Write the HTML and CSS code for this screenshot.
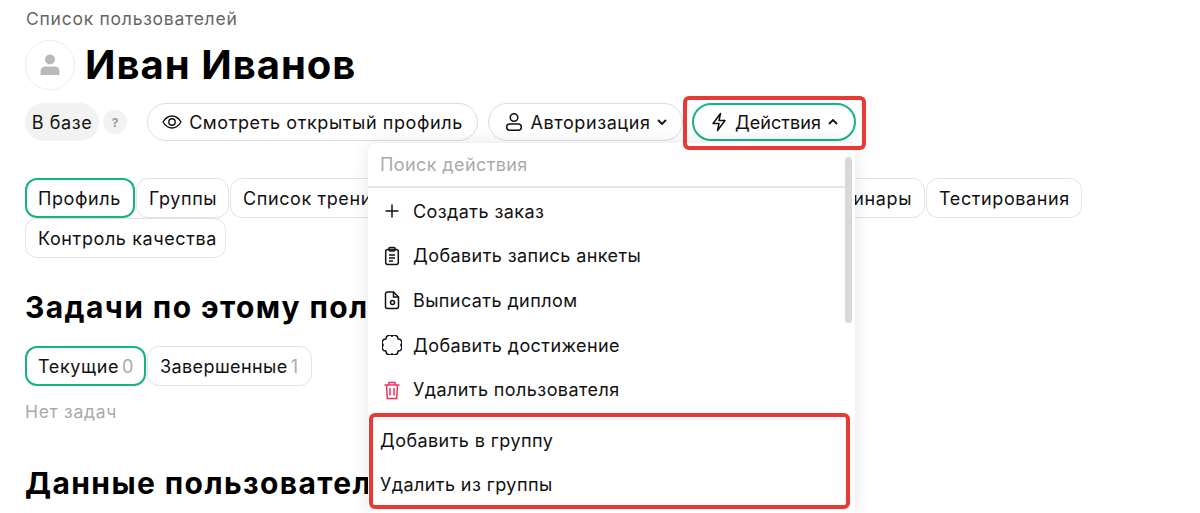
FILE: index.html
```html
<!DOCTYPE html>
<html lang="ru">
<head>
<meta charset="utf-8">
<title>Иван Иванов</title>
<link rel="stylesheet" href="styles.css">
</head>
<body>
<main class="page">
  <div class="crumb">Список пользователей</div>
  <header class="title-row">
    <div class="avatar">
      <svg width="24" height="24" viewBox="0 0 24 24"><circle cx="12" cy="6.500" r="5" fill="#b9b9b9"/><path d="M2.500 22v-3.500c0-3 2-5 5-5h9c3 0 5 2 5 5V22z" fill="#b9b9b9"/></svg>
    </div>
    <h1>Иван Иванов</h1>
  </header>
  <div class="actions">
    <span class="status">В базе</span>
    <span class="help">?</span>
    <button class="btn btn-profile">
      <svg width="20" height="20" viewBox="0 0 20 20" fill="none" stroke="#111" stroke-width="1.400"><path d="M1 10c2.500-4 5.500-6 9-6s6.500 2 9 6c-2.500 4-5.500 6-9 6s-6.500-2-9-6z"/><circle cx="10" cy="10" r="3.200"/></svg>
      Смотреть открытый профиль
    </button>
    <button class="btn btn-auth">
      <svg width="20" height="20" viewBox="0 0 20 20" fill="none" stroke="#111" stroke-width="1.500"><circle cx="10" cy="5.500" r="3.800"/><rect x="2.700" y="12" width="14.600" height="6.300" rx="3"/></svg>
      Авторизация
      <svg class="chev" width="10" height="6" viewBox="0 0 10 6" fill="none" stroke="#111" stroke-width="1.800"><path d="M1 1l4 4 4-4"/></svg>
    </button>
    <button class="btn btn-act">
      <svg width="18" height="20" viewBox="0 0 18 20" fill="none" stroke="#111" stroke-width="1.500" stroke-linejoin="round"><path d="M10.500 1.500 3 11.500h6l-1.500 7 7.500-10H9z"/></svg>
      Действия
      <svg class="chev" width="10" height="6" viewBox="0 0 10 6" fill="none" stroke="#111" stroke-width="1.800"><path d="M1 5l4-4 4 4"/></svg>
    </button>
  </div>
  <nav class="tabs">
    <span class="tab on tab-a">Профиль</span>
    <span class="tab tab-b">Группы</span>
    <span class="tab tab-list">Список тренингов</span>
    <span class="tab tab-sem">Семинары</span>
    <span class="tab tab-test">Тестирования</span>
    <span class="tab tab-qc">Контроль качества</span>
  </nav>
  <h2 class="h-tasks">Задачи по этому пользователю</h2>
  <div class="subtabs">
    <span class="tab on tab-cur">Текущие<i>0</i></span>
    <span class="tab tab-done">Завершенные<i>1</i></span>
  </div>
  <p class="empty">Нет задач</p>
  <h2 class="h-data">Данные пользователя</h2>
</main>

<aside class="menu">
  <div class="search">Поиск действия</div>
  <ul class="items">
    <li><svg width="20" height="20" viewBox="0 0 20 20" fill="none" stroke="#111" stroke-width="1.500"><path d="M10 3.500v13M3.500 10h13"/></svg>Создать заказ</li>
    <li><svg width="20" height="20" viewBox="0 0 20 20" fill="none" stroke="#111" stroke-width="1.500"><rect x="3.700" y="3.500" width="12.600" height="15" rx="2"/><rect x="7" y="1.500" width="6" height="3.500" rx="1"/><path d="M7 9h6M7 12h6M7 15h4"/></svg>Добавить запись анкеты</li>
    <li><svg width="20" height="20" viewBox="0 0 20 20" fill="none" stroke="#111" stroke-width="1.500"><path d="M5.500 2h6l5 5v9.500a2 2 0 0 1-2 2h-9a2 2 0 0 1-2-2v-12.500a2 2 0 0 1 2-2z"/><path d="M11.500 2v5h5"/><circle cx="10.500" cy="12.500" r="2"/></svg>Выписать диплом</li>
    <li><svg width="20" height="20" viewBox="0 0 20 20" fill="none" stroke="#111" stroke-width="1.500" stroke-linejoin="round"><path d="M18.800 10A3.500 3.500 0 0 1 16 16 3.500 3.500 0 0 1 10 18.800 3.500 3.500 0 0 1 4 16 3.500 3.500 0 0 1 1.200 10 3.500 3.500 0 0 1 4 4 3.500 3.500 0 0 1 10 1.200 3.500 3.500 0 0 1 16 4 3.500 3.500 0 0 1 18.800 10z"/></svg>Добавить достижение</li>
    <li><svg width="20" height="20" viewBox="0 0 20 20" fill="none" stroke="#f0305f" stroke-width="1.500"><path d="M2.500 5h15M7 5V2.500h6V5M4.500 5l.8 13.500h9.400l.8-13.500M8 8v7.500M12 8v7.500"/></svg>Удалить пользователя</li>
    <li class="plain">Добавить в группу</li>
    <li class="plain">Удалить из группы</li>
  </ul>
  <div class="scroll"></div>
</aside>
<div class="mark mark-act"></div>
<div class="mark mark-group"></div>
</body>
</html>
```
FILE: styles.css
```css
* { box-sizing: border-box; }
html, body { margin: 0; height: 513px; overflow: hidden; background: #fff; }
body { font-family: Inter, "Noto Sans", sans-serif; color: #111; position: relative; }
.page { padding: 8px 0 0 25px; }
.crumb { font-size: 17.500px; letter-spacing: .75px; line-height: 22px; color: #666; margin-left: 1px; }
.title-row { display: flex; align-items: center; gap: 10px; margin-top: 10px; height: 50px; }
.avatar { width: 50px; height: 50px; border-radius: 50%; border: 1px solid #eee; display: flex; align-items: center; justify-content: center; }
h1 { margin: 0; font-size: 40px; letter-spacing: 1px; line-height: 50px; font-weight: 700; color: #000; }
.actions { display: flex; align-items: center; height: 40px; margin-top: 12px; }
.status { width: 74px; height: 38px; border-radius: 19px; background: #f2f2f2; font-size: 18px; letter-spacing: .6px; display: flex; align-items: center; justify-content: center; }
.help { width: 24px; height: 24px; border-radius: 50%; background: #f2f2f2; margin-left: 4px; color: #999; font-size: 12px; font-weight: 700; display: flex; align-items: center; justify-content: center; }
.btn { height: 38px; border: 1px solid #ddd; border-radius: 19px; background: #fff; font: inherit; font-size: 18px; letter-spacing: .6px; color: #111; display: flex; align-items: center; gap: 6px; padding: 0; justify-content: center; white-space: nowrap; }
.btn-profile { width: 331px; margin-left: 20px; gap: 7px; }
.btn-auth { width: 195px; margin-left: 10px; }
.btn-act { width: 164px; margin-left: 9px; border: 2px solid #12b585; letter-spacing: .05px; gap: 7px; }
.tabs { display: flex; flex-wrap: wrap; column-gap: 1px; margin-top: 36px; max-width: 1060px; }
.tab { height: 40px; padding: 0 12px; border: 1px solid #e2e2e2; border-radius: 12px; background: #fff; font-size: 18px; letter-spacing: .6px; display: flex; align-items: center; white-space: nowrap; }
.tab.on { border: 2px solid #12b585; padding: 0 11px; }
.tab-a { width: 110px; }
.tab-b { width: 93px; }
.tab-list { width: 350px; }
.tab-sem { width: 344px; justify-content: flex-end; }
.tab-test { width: 156px; }
.tab-qc { width: 201px; }
h2 { margin: 0; font-size: 30px; letter-spacing: 1.400px; line-height: 36px; font-weight: 700; color: #000; white-space: nowrap; }
.h-tasks { margin-top: 31px; }
.subtabs { display: flex; gap: 1px; margin-top: 21px; }
.tab-cur { width: 121px; }
.tab-done { width: 165px; letter-spacing: .4px; }
.tab i { font-style: normal; color: #aaa; margin-left: 3px; }
.empty { margin: 14px 0 0; font-size: 17.500px; letter-spacing: .7px; line-height: 24px; color: #aaa; }
.h-data { margin-top: 41px; }
.menu { position: absolute; left: 368px; top: 143px; width: 487px; height: 370px; background: #fff; border-radius: 10px 10px 0 0; box-shadow: 0 0 18px rgba(0,0,0,.10); }
.search { height: 45px; margin: 0 10px 0 0; padding: 0 0 0 12px; border-bottom: 2px solid #e6e6e6; display: flex; align-items: center; color: #aaa; font-size: 18px; letter-spacing: .4px; }
.items { list-style: none; margin: 0; padding: 1px 0 0; }
.items li { height: 44.600px; display: flex; align-items: center; gap: 11px; padding-left: 14px; font-size: 18px; letter-spacing: .42px; }
.items li.plain { padding-left: 12px; }
.items li:nth-child(6) { margin-top: 6px; }
.scroll { position: absolute; left: 477px; top: 14px; width: 7px; height: 166px; border-radius: 4px; background: #d8d8d8; }
.mark { position: absolute; border: 4px solid #e63a32; border-radius: 6px; pointer-events: none; }
.mark-act { left: 683px; top: 96px; width: 183px; height: 54px; }
.mark-group { left: 369px; top: 413px; width: 481px; height: 96px; }
```
